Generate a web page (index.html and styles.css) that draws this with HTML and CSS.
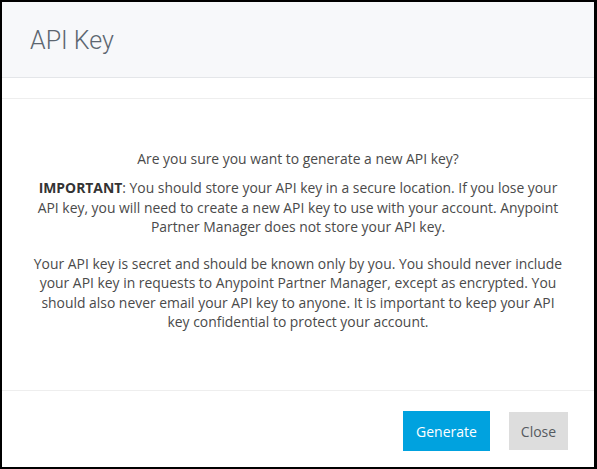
FILE: index.html
```html
<!DOCTYPE html>
<html>
<head>
<meta charset="utf-8">
<link rel="stylesheet" href="styles.css">
</head>
<body>
<div class="modal">
  <div class="modal-header">
    <h1 class="modal-title">API Key</h1>
  </div>
  <div class="modal-gap"></div>
  <div class="modal-body">
    <p class="question">Are you sure you want to generate a new API key?</p>
    <p class="para"><strong>IMPORTANT</strong>: You should store your API key in a secure location. If you lose your API key, you will need to create a new API key to use with your account. Anypoint Partner Manager does not store your API key.</p>
    <p class="para second">Your API key is secret and should be known only by you. You should never include your API key in requests to Anypoint Partner Manager, except as encrypted. You should also never email your API key to anyone. It is important to keep your API key confidential to protect your account.</p>
  </div>
  <div class="modal-footer">
    <button class="btn btn-primary">Generate</button>
    <button class="btn btn-default">Close</button>
  </div>
</div>
</body>
</html>
```
FILE: styles.css
```css
html, body {
  margin: 0;
  padding: 0;
  height: 100%;
}
body {
  background: #000;
  padding: 2px 3px 2px 2px;
  box-sizing: border-box;
  font-family: "Open Sans", "Liberation Sans", sans-serif;
}
.modal {
  background: #fff;
  height: 100%;
  display: flex;
  flex-direction: column;
}
.modal-header {
  background: #f7f8fa;
  height: 75px;
  border-bottom: 1px solid #e4e6e9;
  display: flex;
  align-items: center;
  padding-left: 28px;
  flex-shrink: 0;
}
.modal-title {
  margin: 0;
  font-family: "Roboto", "Open Sans", sans-serif;
  font-weight: 300;
  font-size: 25px;
  color: #5c6670;
  padding-top: 2px;
}
.modal-gap {
  height: 20px;
  border-bottom: 1px solid #eeeeee;
  flex-shrink: 0;
}
.modal-body {
  flex: 1;
  padding: 50px 28px 0;
  text-align: center;
  font-size: 13.9px;
  line-height: 19.3px;
  color: #4a4a4a;
}
.modal-body p {
  margin: 0;
}
.question {
  margin-bottom: 10px !important;
}
.para strong {
  font-weight: 700;
  color: #333;
}
.second {
  margin-top: 18px !important;
}
.modal-footer {
  height: 72px;
  padding-top: 4px;
  border-top: 1px solid #eeeeee;
  display: flex;
  justify-content: flex-end;
  align-items: center;
  gap: 19px;
  padding-right: 26px;
  flex-shrink: 0;
}
.btn {
  font-family: "Open Sans", "Liberation Sans", sans-serif;
  font-size: 14px;
  border: none;
  padding: 0;
  cursor: pointer;
}
.btn-primary {
  background: #00a2df;
  color: #fff;
  width: 87px;
  height: 40px;
}
.btn-default {
  background: #dddddd;
  color: #555a60;
  width: 59px;
  height: 38px;
}
```
